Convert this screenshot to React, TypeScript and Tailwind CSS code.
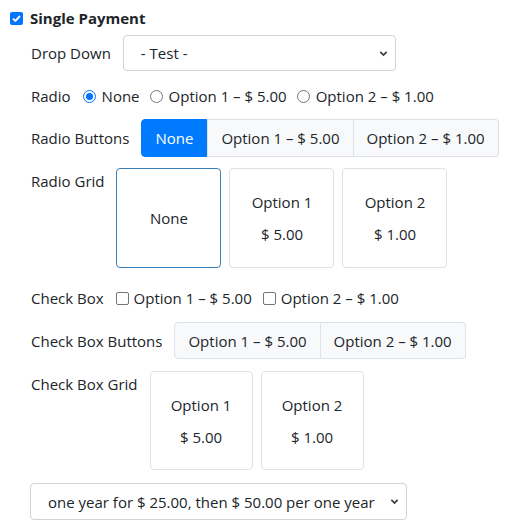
function Chevron() {
  return (
    <svg width="9" height="9" viewBox="0 0 10 10" className="text-[#343a40]">
      <path d="M1.5 3.2 5 6.7 8.5 3.2" fill="none" stroke="currentColor" strokeWidth="1.8" />
    </svg>
  )
}

function Select({ label, className }: { label: string; className: string }) {
  return (
    <div
      className={`flex items-center justify-between border border-[#ced4da] rounded-[4px] bg-white pl-[17px] pr-[7px] ${className}`}
    >
      <span>{label}</span>
      <Chevron />
    </div>
  )
}

function Radio({ checked }: { checked?: boolean }) {
  return checked ? (
    <span className="w-[13px] h-[13px] rounded-full border-[1.5px] border-[#0075ff] flex items-center justify-center">
      <span className="w-[7px] h-[7px] rounded-full bg-[#0075ff]" />
    </span>
  ) : (
    <span className="w-[13px] h-[13px] rounded-full border border-[#767676]" />
  )
}

function Box() {
  return <span className="w-[13px] h-[13px] rounded-[2px] border border-[#767676]" />
}

function Card({
  top,
  bottom,
  active,
  className = 'w-[105px] h-[100px]',
}: {
  top: string
  bottom?: string
  active?: boolean
  className?: string
}) {
  return (
    <div
      className={`rounded-[4px] border flex flex-col items-center justify-center gap-2 ${className} ${
        active ? 'border-[#3a80b8]' : 'border-[#dee2e6]'
      }`}
    >
      <span className="leading-6">{top}</span>
      {bottom && <span className="leading-6">{bottom}</span>}
    </div>
  )
}

export default function App() {
  return (
    <div className="w-[513px] h-[530px] bg-white text-[#212529] text-[15px] leading-6 font-['Open_Sans',sans-serif] overflow-hidden">
      <div className="mt-[6px] h-6 flex items-center pl-[10px]">
        <span className="w-[13px] h-[13px] rounded-[2px] bg-[#0075ff] flex items-center justify-center">
          <svg width="11" height="11" viewBox="0 0 11 11">
            <path d="M2 5.6 4.4 8 9 3" fill="none" stroke="white" strokeWidth="1.9" />
          </svg>
        </span>
        <span className="ml-[7px] font-bold">Single Payment</span>
      </div>

      <div className="pl-[31px]">
        <div className="mt-[5px] flex items-center gap-3">
          <span>Drop Down</span>
          <Select label="- Test -" className="w-[273px] h-[36px]" />
        </div>

        <div className="mt-[13px] h-6 flex items-center">
          <span className="mr-3">Radio</span>
          <Radio checked />
          <span className="ml-[6px] mr-[10px]">None</span>
          <Radio />
          <span className="ml-[6px] mr-[10px]">Option 1 – $ 5.00</span>
          <Radio />
          <span className="ml-[6px]">Option 2 – $ 1.00</span>
        </div>

        <div className="mt-[11px] flex items-center gap-3">
          <span>Radio Buttons</span>
          <div className="flex h-[38px]">
            <span className="px-[13px] flex items-center bg-[#007bff] text-white border border-[#007bff] rounded-l-[4px]">
              None
            </span>
            <span className="px-[13px] flex items-center bg-[#f8f9fa] border border-[#dee2e6]">
              Option 1 – $ 5.00
            </span>
            <span className="px-[13px] flex items-center bg-[#f8f9fa] border border-l-0 border-[#dee2e6] rounded-r-[4px]">
              Option 2 – $ 1.00
            </span>
          </div>
        </div>

        <div className="mt-[11px] flex items-start gap-3">
          <span className="mt-[1px]">Radio Grid</span>
          <div className="flex gap-2">
            <Card top="None" active />
            <Card top="Option 1" bottom="$ 5.00" />
            <Card top="Option 2" bottom="$ 1.00" />
          </div>
        </div>

        <div className="mt-[18px] h-6 flex items-center">
          <span className="mr-3">Check Box</span>
          <Box />
          <span className="ml-[5px] mr-[11px]">Option 1 – $ 5.00</span>
          <Box />
          <span className="ml-[5px]">Option 2 – $ 1.00</span>
        </div>

        <div className="mt-[12px] flex items-center gap-3">
          <span>Check Box Buttons</span>
          <div className="flex h-[37px]">
            <span className="px-[13px] flex items-center bg-[#f8f9fa] border border-[#dee2e6] rounded-l-[4px]">
              Option 1 – $ 5.00
            </span>
            <span className="px-[13px] flex items-center bg-[#f8f9fa] border border-l-0 border-[#dee2e6] rounded-r-[4px]">
              Option 2 – $ 1.00
            </span>
          </div>
        </div>

        <div className="mt-[12px] flex items-start gap-3">
          <span className="mt-[1px]">Check Box Grid</span>
          <div className="flex gap-2">
            <Card top="Option 1" bottom="$ 5.00" className="w-[103px] h-[99px]" />
            <Card top="Option 2" bottom="$ 1.00" className="w-[103px] h-[99px]" />
          </div>
        </div>
      </div>

      <div className="pl-[30px] mt-[13px]">
        <Select label="one year for $ 25.00, then $ 50.00 per one year" className="w-[377px] h-[37px]" />
      </div>
    </div>
  )
}
